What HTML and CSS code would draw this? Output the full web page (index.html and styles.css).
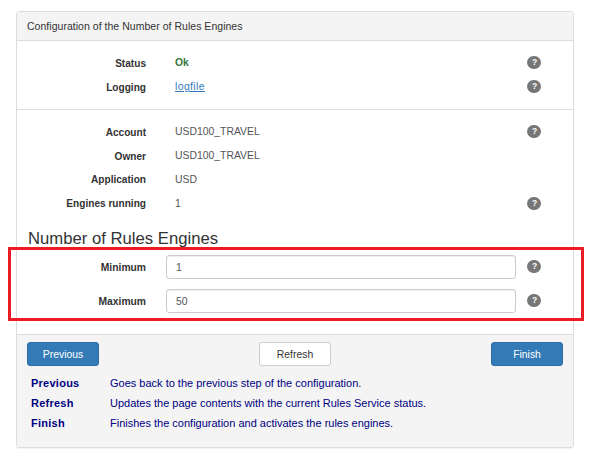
FILE: index.html
```html
<!DOCTYPE html>
<html lang="en">
<head>
<meta charset="utf-8">
<title>Configuration of the Number of Rules Engines</title>
<link rel="stylesheet" href="styles.css">
</head>
<body>
<main class="panel">
  <header class="panel-heading">Configuration of the Number of Rules Engines</header>
  <section class="status">
    <div class="row"><span class="label">Status</span><span class="value ok">Ok</span><span class="help">?</span></div>
    <div class="row"><span class="label">Logging</span><span class="value"><a class="link" href="#">logfile</a></span><span class="help">?</span></div>
  </section>
  <section class="details">
    <div class="row"><span class="label">Account</span><span class="value">USD100_TRAVEL</span><span class="help">?</span></div>
    <div class="row"><span class="label">Owner</span><span class="value">USD100_TRAVEL</span></div>
    <div class="row"><span class="label">Application</span><span class="value">USD</span></div>
    <div class="row"><span class="label">Engines running</span><span class="value">1</span><span class="help">?</span></div>
    <h1 class="title">Number of Rules Engines</h1>
    <div class="fields">
      <div class="field"><label class="label" for="min">Minimum</label><input class="input" id="min" value="1"><span class="help">?</span></div>
      <div class="field"><label class="label" for="max">Maximum</label><input class="input" id="max" value="50"><span class="help">?</span></div>
    </div>
  </section>
  <footer class="panel-footer">
    <div class="buttons">
      <button class="btn primary">Previous</button>
      <button class="btn">Refresh</button>
      <button class="btn primary">Finish</button>
    </div>
    <dl class="legend">
      <dt>Previous</dt><dd>Goes back to the previous step of the configuration.</dd>
      <dt>Refresh</dt><dd>Updates the page contents with the current Rules Service status.</dd>
      <dt>Finish</dt><dd>Finishes the configuration and activates the rules engines.</dd>
    </dl>
  </footer>
</main>
</body>
</html>
```
FILE: styles.css
```css
* { box-sizing: border-box; }
body {
  margin: 0;
  padding: 11px 20px 9px 16px;
  background: #fff;
  color: #333;
  font: 10px/14px "Liberation Sans", Arial, sans-serif;
}
.panel {
  width: 558px;
  height: 437px;
  border: 1px solid #ddd;
  border-radius: 3px;
  box-shadow: 0 1px 1px rgba(0, 0, 0, .05);
}
.panel-heading {
  height: 29px;
  padding: 7px 10px 0;
  background: #f4f4f4;
  border-bottom: 1px solid #ddd;
  font-size: 10.5px;
  letter-spacing: .03px;
}
.status {
  height: 69px;
  padding-top: 10px;
  border-bottom: 1px solid #ddd;
}
.details { height: 224px; padding-top: 10px; }
.row, .field {
  display: grid;
  grid-template-columns: 129px 350px 14px;
  align-items: center;
}
.row { height: 23.8px; }
.label {
  text-align: right;
  font-weight: bold;
  font-size: 10.1px;
  padding-top: 2px;
}
.value { padding: 1px 0 0 29px; color: #555; font-size: 10.4px; }
.ok { color: #3c763d; font-weight: bold; }
.link { color: #337ab7; text-decoration: underline; letter-spacing: .4px; }
.help {
  width: 14px;
  height: 13px;
  margin-left: 31px;
  border-radius: 7px;
  background: #777;
  color: #fff;
  font-size: 8.5px;
  font-weight: bold;
  line-height: 13px;
  padding-left: 1px;
  text-align: center;
}
.title {
  margin: 14px 0 0 11px;
  font-size: 16.7px;
  font-weight: normal;
  line-height: 19px;
  height: 19px;
}
.fields {
  position: relative;
  display: grid;
  row-gap: 10px;
  padding-top: 7px;
}
.fields::after {
  content: "";
  box-sizing: border-box;
  position: absolute;
  left: -9px;
  top: -1px;
  width: 576px;
  height: 74px;
  border: 3px solid #ed1c24;
  pointer-events: none;
}
.field { grid-template-columns: 129px 20px 350px 14px; height: 24px; }
.field .label { padding-top: 1px; font-size: 10.3px; }
.input {
  grid-column: 3;
  height: 24px;
  padding: 0 9px;
  border: 1px solid #ccc;
  border-radius: 3px;
  box-shadow: inset 0 1px 1px rgba(0, 0, 0, .075);
  background: #fff;
  color: #555;
  font: inherit;
  font-size: 10.4px;
}
.field .help { margin: -2px 0 0 11px; }
.panel-footer {
  height: 113px;
  padding: 7px 10px 0;
  border-top: 1px solid #ddd;
  background: #f4f4f4;
}
.buttons { display: flex; justify-content: space-between; }
.btn {
  width: 72px;
  height: 24px;
  padding: 1px 0 0;
  border: 1px solid #ccc;
  border-radius: 3px;
  background: #fff;
  color: #333;
  font: inherit;
  font-size: 10.4px;
}
.primary { border-color: #2e6da4; background: #337ab7; color: #fff; }
.legend {
  display: grid;
  grid-template-columns: 79px 1fr;
  grid-auto-rows: 20px;
  margin: 7px 0 0 4px;
  color: #000080;
  font-size: 11px;
  line-height: 20px;
}
.legend dt { font-weight: bold; letter-spacing: .25px; }
.legend dd { margin: 0; }
```
